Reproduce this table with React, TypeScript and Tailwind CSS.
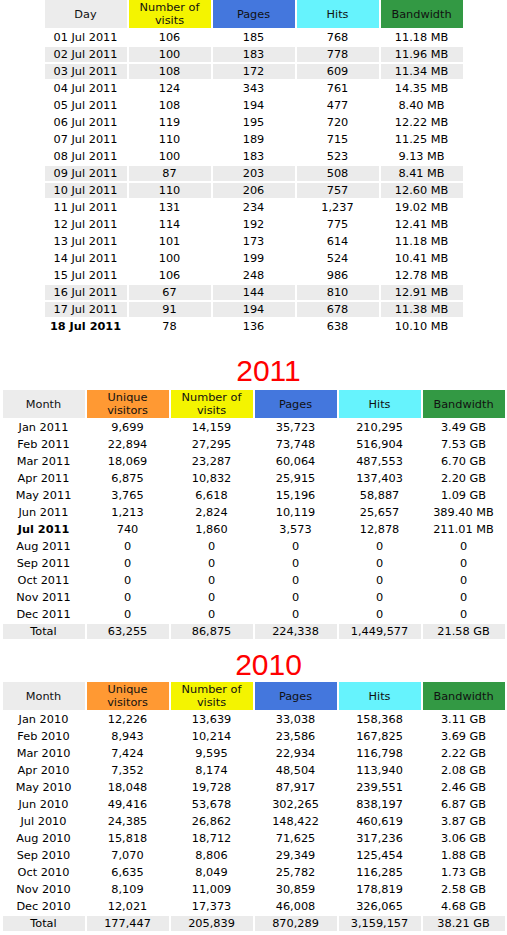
const font = { fontFamily: '"DejaVu Sans", Verdana, sans-serif' };

const days = [
  ["01 Jul 2011", "106", "185", "768", "11.18 MB"],
  ["02 Jul 2011", "100", "183", "778", "11.96 MB", "we"],
  ["03 Jul 2011", "108", "172", "609", "11.34 MB", "we"],
  ["04 Jul 2011", "124", "343", "761", "14.35 MB"],
  ["05 Jul 2011", "108", "194", "477", "8.40 MB"],
  ["06 Jul 2011", "119", "195", "720", "12.22 MB"],
  ["07 Jul 2011", "110", "189", "715", "11.25 MB"],
  ["08 Jul 2011", "100", "183", "523", "9.13 MB"],
  ["09 Jul 2011", "87", "203", "508", "8.41 MB", "we"],
  ["10 Jul 2011", "110", "206", "757", "12.60 MB", "we"],
  ["11 Jul 2011", "131", "234", "1,237", "19.02 MB"],
  ["12 Jul 2011", "114", "192", "775", "12.41 MB"],
  ["13 Jul 2011", "101", "173", "614", "11.18 MB"],
  ["14 Jul 2011", "100", "199", "524", "10.41 MB"],
  ["15 Jul 2011", "106", "248", "986", "12.78 MB"],
  ["16 Jul 2011", "67", "144", "810", "12.91 MB", "we"],
  ["17 Jul 2011", "91", "194", "678", "11.38 MB", "we"],
  ["18 Jul 2011", "78", "136", "638", "10.10 MB", "today"],
];

const year2011 = [
  ["Jan 2011", "9,699", "14,159", "35,723", "210,295", "3.49 GB"],
  ["Feb 2011", "22,894", "27,295", "73,748", "516,904", "7.53 GB"],
  ["Mar 2011", "18,069", "23,287", "60,064", "487,553", "6.70 GB"],
  ["Apr 2011", "6,875", "10,832", "25,915", "137,403", "2.20 GB"],
  ["May 2011", "3,765", "6,618", "15,196", "58,887", "1.09 GB"],
  ["Jun 2011", "1,213", "2,824", "10,119", "25,657", "389.40 MB"],
  ["Jul 2011", "740", "1,860", "3,573", "12,878", "211.01 MB", "bold"],
  ["Aug 2011", "0", "0", "0", "0", "0"],
  ["Sep 2011", "0", "0", "0", "0", "0"],
  ["Oct 2011", "0", "0", "0", "0", "0"],
  ["Nov 2011", "0", "0", "0", "0", "0"],
  ["Dec 2011", "0", "0", "0", "0", "0"],
];
const total2011 = ["Total", "63,255", "86,875", "224,338", "1,449,577", "21.58 GB"];

const year2010 = [
  ["Jan 2010", "12,226", "13,639", "33,038", "158,368", "3.11 GB"],
  ["Feb 2010", "8,943", "10,214", "23,586", "167,825", "3.69 GB"],
  ["Mar 2010", "7,424", "9,595", "22,934", "116,798", "2.22 GB"],
  ["Apr 2010", "7,352", "8,174", "48,504", "113,940", "2.08 GB"],
  ["May 2010", "18,048", "19,728", "87,917", "239,551", "2.46 GB"],
  ["Jun 2010", "49,416", "53,678", "302,265", "838,197", "6.87 GB"],
  ["Jul 2010", "24,385", "26,862", "148,422", "460,619", "3.87 GB"],
  ["Aug 2010", "15,818", "18,712", "71,625", "317,236", "3.06 GB"],
  ["Sep 2010", "7,070", "8,806", "29,349", "125,454", "1.88 GB"],
  ["Oct 2010", "6,635", "8,049", "25,782", "116,285", "1.73 GB"],
  ["Nov 2010", "8,109", "11,009", "30,859", "178,819", "2.58 GB"],
  ["Dec 2010", "12,021", "17,373", "46,008", "326,065", "4.68 GB"],
];
const total2010 = ["Total", "177,447", "205,839", "870,289", "3,159,157", "38.21 GB"];

const Head = ({ label, bg }: { label: string; bg: string }) => (
  <div className={`h-[28px] px-[6px] flex items-center justify-center text-center leading-[13px] text-[#111] ${bg}`}>
    {label}
  </div>
);

const Row = ({ cells, shade, bold }: { cells: string[]; shade?: boolean; bold?: boolean }) => (
  <>
    {cells.map((c, i) => (
      <div
        key={i}
        className={`h-[15px] leading-[15px] text-center whitespace-nowrap text-black ${shade ? "bg-[#ebebeb]" : ""} ${bold && i === 0 ? "font-bold" : ""}`}
      >
        {c}
      </div>
    ))}
  </>
);

const headsMonth = (
  <>
    <Head label="Month" bg="bg-[#ececec]" />
    <Head label="Unique visitors" bg="bg-[#ff9933]" />
    <Head label="Number of visits" bg="bg-[#f4f400]" />
    <Head label="Pages" bg="bg-[#4477dd]" />
    <Head label="Hits" bg="bg-[#66f3fd]" />
    <Head label="Bandwidth" bg="bg-[#339944]" />
  </>
);

const YearTable = ({ year, rows, total, tight }: { year: string; rows: string[][]; total: string[]; tight?: boolean }) => (
  <div>
    <div
      className={`pl-[30px] text-center text-[30px] leading-[34px] text-[#ff0000] ${tight ? "" : "mb-[2px]"}`}
      style={{ fontFamily: '"Liberation Sans", Arial, sans-serif' }}
    >
      {year}
    </div>
    <div className="grid grid-cols-[repeat(6,82px)] gap-[2px] w-[502px] mx-auto">
      {headsMonth}
      {rows.map((r, i) => (
        <Row key={i} cells={r.slice(0, 6)} bold={r[6] === "bold"} />
      ))}
      <Row cells={total} shade />
    </div>
  </div>
);

export default function App() {
  return (
    <div className="w-[507px] min-h-[935px] bg-white text-[11.3px] pb-[8px]" style={font}>
      <div className="grid grid-cols-[repeat(5,82px)] gap-[2px] w-[418px] mx-auto">
        <Head label="Day" bg="bg-[#ececec]" />
        <Head label="Number of visits" bg="bg-[#f4f400]" />
        <Head label="Pages" bg="bg-[#4477dd]" />
        <Head label="Hits" bg="bg-[#66f3fd]" />
        <Head label="Bandwidth" bg="bg-[#339944]" />
        {days.map((d, i) => (
          <Row key={i} cells={d.slice(0, 5)} shade={d[5] === "we"} bold={d[5] === "today"} />
        ))}
      </div>
      <div className="mt-[20px]">
        <YearTable year="2011" rows={year2011} total={total2011} />
      </div>
      <div className="mt-[9px]">
        <YearTable year="2010" rows={year2010} total={total2010} tight />
      </div>
    </div>
  );
}
